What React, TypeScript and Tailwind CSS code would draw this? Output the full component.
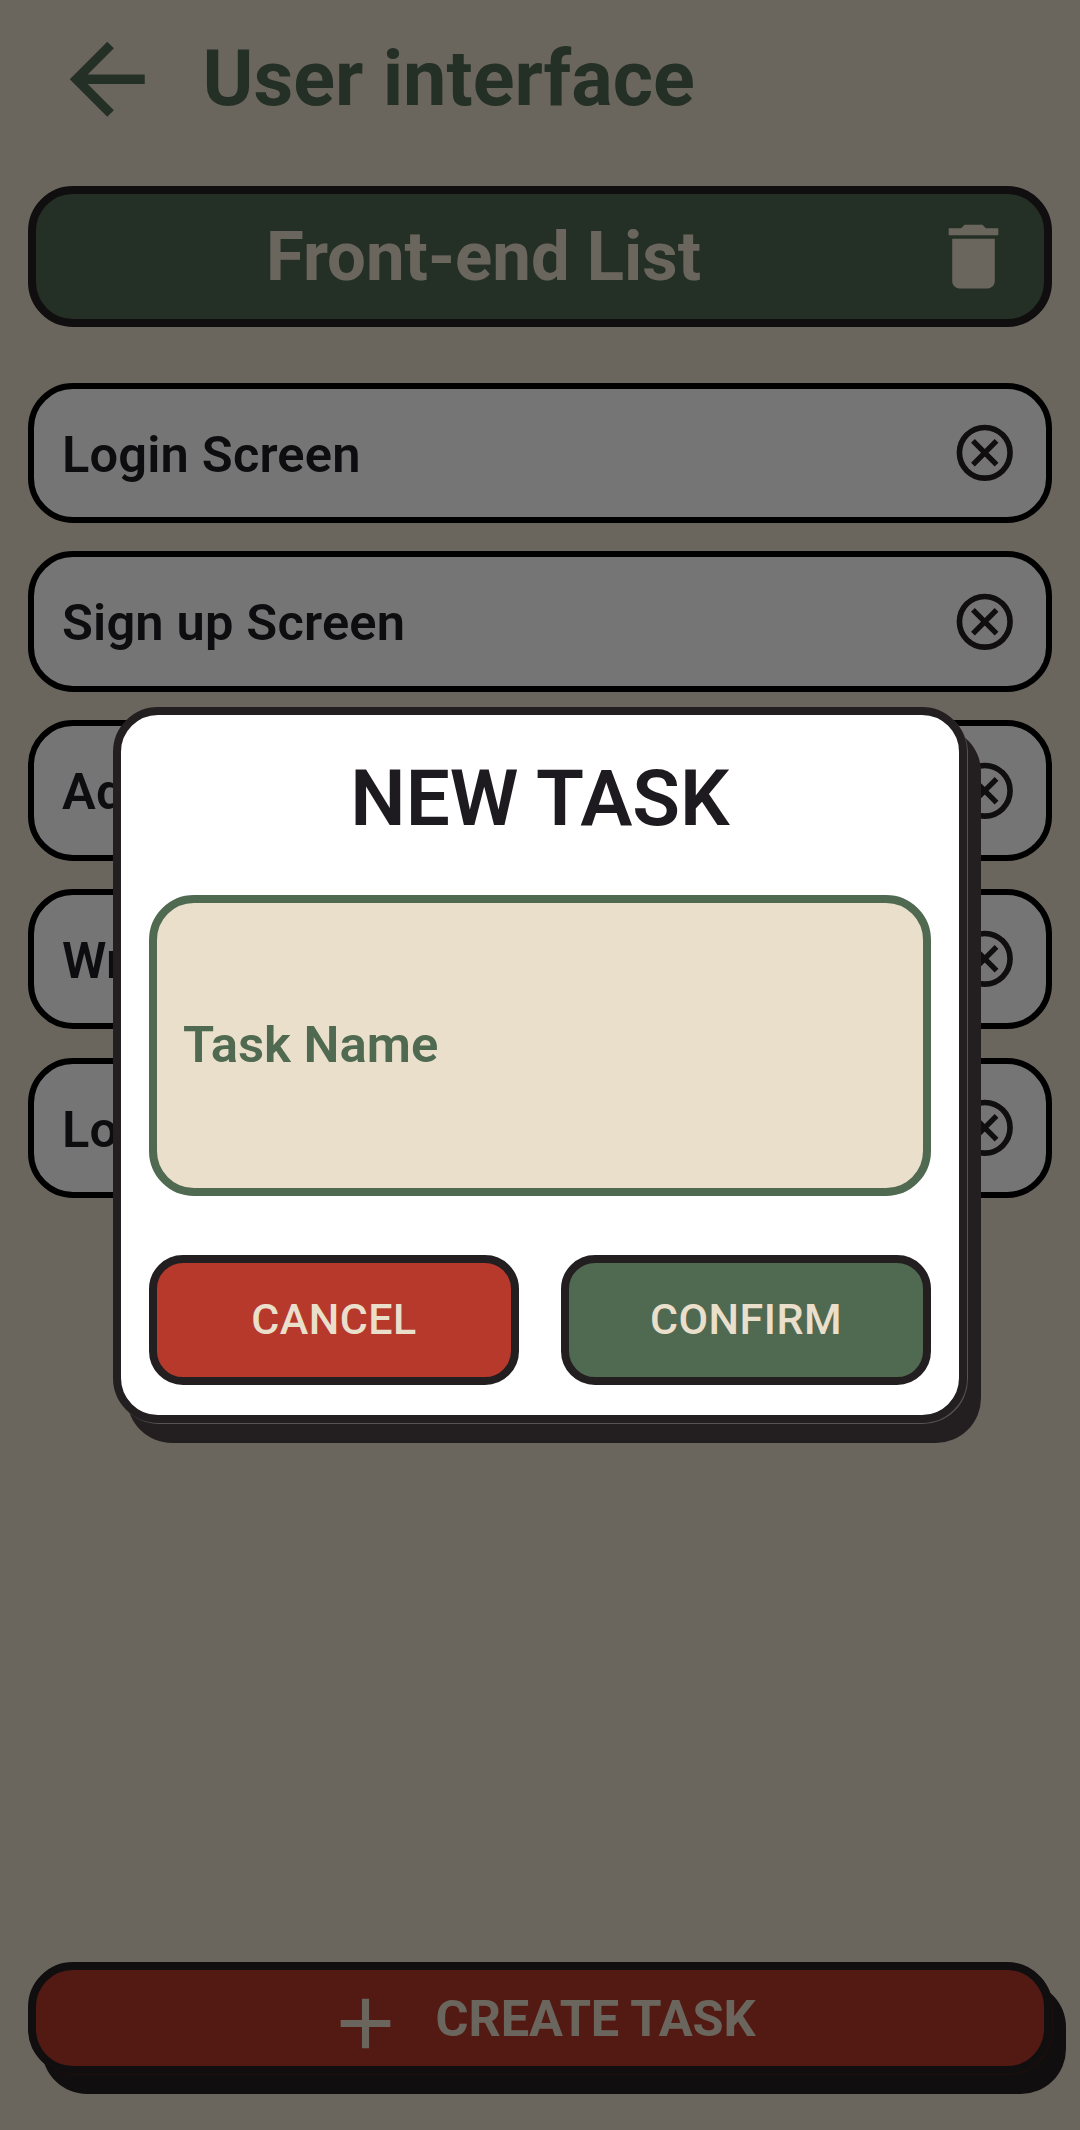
const tasks = ["Login Screen", "Sign up Screen", "Add Task", "Write Tests", "Logout Button"];

function BackIcon() {
  return (
    <svg viewBox="0 0 24 24" className="size-[112.5px] shrink-0 fill-[#506951]">
      <path d="M20 11H7.83l5.59-5.59L12 4l-8 8 8 8 1.41-1.41L7.83 13H20v-2z" />
    </svg>
  );
}

function TrashIcon() {
  return (
    <svg viewBox="0 0 24 24" className="size-[85px] shrink-0 fill-[#e9dfcb]">
      <path d="M6 19c0 1.1.9 2 2 2h8c1.1 0 2-.9 2-2V7H6v12zM19 4h-3.5l-1-1h-5l-1 1H5v2h14V4z" />
    </svg>
  );
}

function CircleXIcon() {
  return (
    <svg viewBox="0 0 24 24" className="size-[67.5px] shrink-0 fill-none stroke-[#231f20]">
      <circle cx="12" cy="12" r="9" strokeWidth="2" />
      <path d="M7.8 7.8l8.4 8.4M16.2 7.8l-8.4 8.4" strokeWidth="1.9" />
    </svg>
  );
}

function PlusIcon() {
  return (
    <svg viewBox="0 0 24 24" className="mt-[11px] size-[85px] shrink-0 fill-[#e9dfcb]">
      <path d="M19 13h-6v6h-2v-6H5v-2h6V5h2v6h6v2z" />
    </svg>
  );
}

function TaskRow({ name }: { name: string }) {
  return (
    <li className="flex h-[140.625px] shrink-0 items-center justify-between rounded-[45px] border-[6px] border-black bg-white px-7">
      <span className="pt-[4px] text-[50.6px] leading-none font-semibold tracking-[0.18px] text-[#1d1b20]">{name}</span>
      <CircleXIcon />
    </li>
  );
}

export default function App() {
  return (
    <div className="relative flex h-[2130px] w-[1080px] flex-col overflow-hidden bg-[#e9dfcb] font-[Roboto,sans-serif]">
      <header className="flex h-[158px] shrink-0 items-center pl-[51px]">
        <BackIcon />
        <h1 className="ml-[39px] text-[77.4px] leading-none font-bold text-[#506951]">User interface</h1>
      </header>

      <main className="flex grow flex-col px-7 pt-7">
        <div className="flex h-[140.5px] shrink-0 items-center rounded-[45px] border-8 border-[#231f20] bg-[#506951] pr-7">
          <h2 className="grow pt-[2px] text-center text-[68.9px] leading-none font-bold text-[#e9dfcb]">Front-end List</h2>
          <TrashIcon />
        </div>
        <ul className="mt-14 flex flex-col gap-[28.125px]">
          {tasks.map((name) => (
            <TaskRow key={name} name={name} />
          ))}
        </ul>
      </main>

      <div className="mb-14 shrink-0 px-7">
        <button className="flex h-[112px] w-full items-center justify-center rounded-[45px] border-8 border-[#231f20] bg-[#b6392c] pr-[2px] text-[#e9dfcb] shadow-[1px_1px_0_0_#43201c,14px_20px_0_0_#231f20]">
          <PlusIcon />
          <span className="ml-[28px] pt-[2px] text-[50.5px] leading-none font-bold tracking-[-0.15px]">CREATE TASK</span>
        </button>
      </div>

      <div className="absolute inset-0 flex items-center justify-center bg-[#0000008a]">
        <div
          role="dialog"
          className="flex h-[716px] w-[854px] flex-col rounded-[45px] border-8 border-[#231f20] bg-white px-7 shadow-[1px_1px_0_0_#565254,14px_20px_0_0_#231f20]"
        >
          <h2 className="mt-[44px] text-center text-[78.2px] leading-[78px] font-semibold text-[#1d1b20]">NEW TASK</h2>
          <div className="mt-[58px] flex h-[301px] items-center rounded-[45px] border-8 border-[#506951] bg-[#e9dfcb] pl-[26px]">
            <span className="text-[50.8px] leading-none font-semibold text-[#506951]">Task Name</span>
          </div>
          <div className="mt-[59px] grid h-[130px] grid-cols-2 gap-[42px]">
            <button className="rounded-[34px] border-8 border-[#231f20] bg-[#b6392c] pb-[2px] text-[43px] font-[550] tracking-[0.5px] text-[#e9dfcb]">
              CANCEL
            </button>
            <button className="rounded-[34px] border-8 border-[#231f20] bg-[#506951] pb-[2px] text-[43px] font-[550] tracking-[0.5px] text-[#e9dfcb]">
              CONFIRM
            </button>
          </div>
        </div>
      </div>
    </div>
  );
}
